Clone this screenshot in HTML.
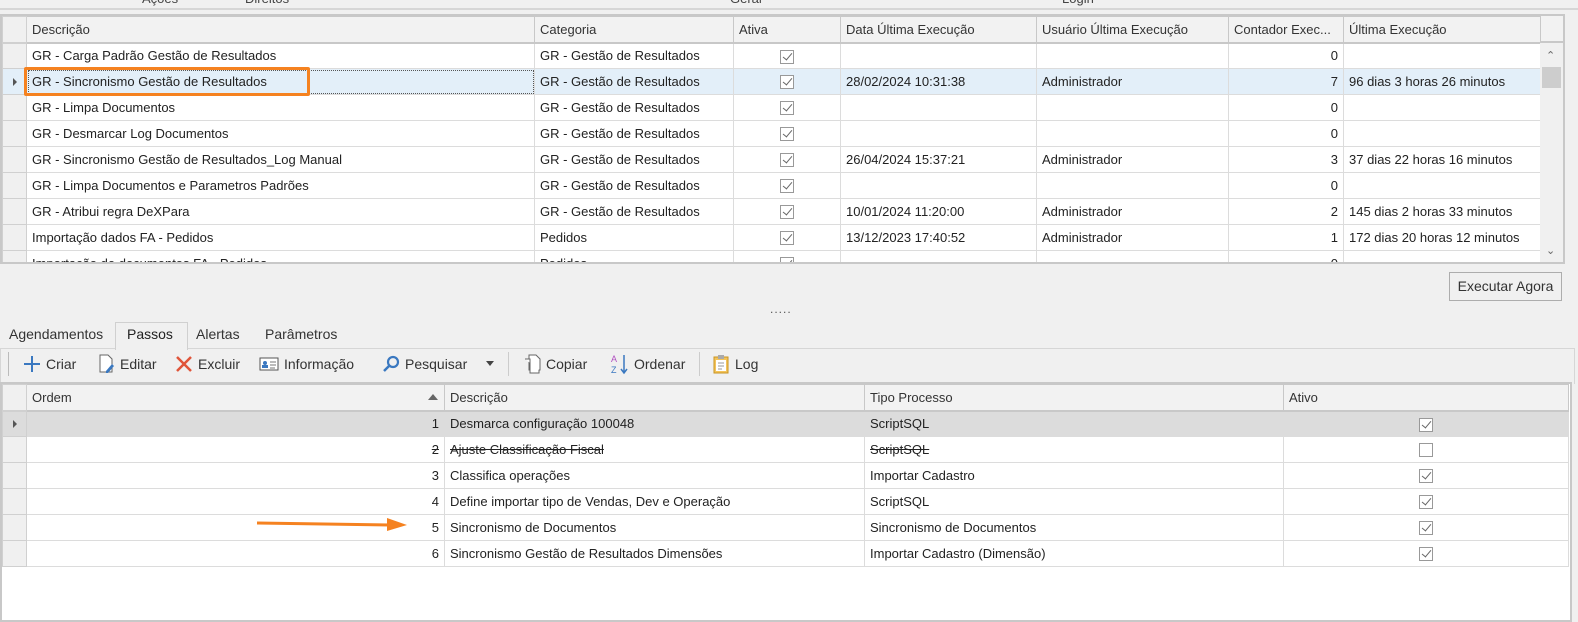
<!DOCTYPE html>
<html><head><meta charset="utf-8">
<style>
*{box-sizing:border-box;margin:0;padding:0}
body{width:1578px;height:618px;overflow:hidden;background:#f0f0f0;font-family:"Liberation Sans",sans-serif;font-size:13px;color:#222;position:relative}
.abs{position:absolute}
table{border-collapse:collapse;table-layout:fixed;background:#fff}
td,th{height:26px;border:1px solid #dcdcdc;padding:0 5px;white-space:nowrap;overflow:hidden;font-weight:normal;text-align:left}
th{background:#f2f2f2;border-color:#c8c8c8;border-bottom:2px solid #c8c8c8;color:#333}
td.ind,th.ind{background:#f0f0f0;border-color:#d0d0d0;padding:0}
.r{text-align:right}
.c{text-align:center;padding:0}
.cb{display:inline-block;width:14px;height:14px;border:1px solid #999;background:#fff;vertical-align:middle;position:relative}
.cb.k::after{content:"";position:absolute;left:4px;top:0px;width:4px;height:8px;border:solid #666;border-width:0 1.5px 1.5px 0;transform:rotate(40deg)}
tr.sel td{background:#e3eff9}
tr.g td{background:#dcdcdc}
.tri{display:inline-block;width:0;height:0;border-left:4px solid #555;border-top:4px solid transparent;border-bottom:4px solid transparent;margin-left:10px}
.tb{display:flex;align-items:center;gap:5px;position:absolute;top:352px;height:24px;font-size:14px;color:#333}
.sep{position:absolute;top:352px;width:1px;height:24px;background:#ccc}
</style></head><body>
<div class="abs" style="left:0;top:0;width:1578px;height:10px;background:#f0f0f0;border-bottom:2px solid #d6d6d6"></div>
<div class="abs" style="left:142px;top:-9px;color:#444">Ações</div>
<div class="abs" style="left:245px;top:-9px;color:#444">Direitos</div>
<div class="abs" style="left:730px;top:-9px;color:#444">Geral</div>
<div class="abs" style="left:1062px;top:-9px;color:#444">Login</div>

<div class="abs" style="left:0;top:14px;width:1565px;height:250px;border:2px solid #c8c8c8;overflow:hidden;background:#fff">
<table style="width:1540px">
<colgroup><col style="width:24px"><col style="width:508px"><col style="width:199px"><col style="width:107px"><col style="width:196px"><col style="width:192px"><col style="width:115px"><col style="width:199px"></colgroup>
<tr><th class="ind"></th><th>Descrição</th><th>Categoria</th><th>Ativa</th><th>Data Última Execução</th><th>Usuário Última Execução</th><th>Contador Exec...</th><th>Última Execução</th></tr>
<tr><td class="ind"></td><td>GR - Carga Padrão Gestão de Resultados</td><td>GR - Gestão de Resultados</td><td class="c"><span class="cb k"></span></td><td></td><td></td><td class="r">0</td><td></td></tr>
<tr class="sel"><td class="ind"><span class="tri"></span></td><td style="outline:1px dotted #555;outline-offset:-2px">GR - Sincronismo Gestão de Resultados</td><td>GR - Gestão de Resultados</td><td class="c"><span class="cb k"></span></td><td>28/02/2024 10:31:38</td><td>Administrador</td><td class="r">7</td><td>96 dias 3 horas 26 minutos</td></tr>
<tr><td class="ind"></td><td>GR - Limpa Documentos</td><td>GR - Gestão de Resultados</td><td class="c"><span class="cb k"></span></td><td></td><td></td><td class="r">0</td><td></td></tr>
<tr><td class="ind"></td><td>GR - Desmarcar Log Documentos</td><td>GR - Gestão de Resultados</td><td class="c"><span class="cb k"></span></td><td></td><td></td><td class="r">0</td><td></td></tr>
<tr><td class="ind"></td><td>GR - Sincronismo Gestão de Resultados_Log Manual</td><td>GR - Gestão de Resultados</td><td class="c"><span class="cb k"></span></td><td>26/04/2024 15:37:21</td><td>Administrador</td><td class="r">3</td><td>37 dias 22 horas 16 minutos</td></tr>
<tr><td class="ind"></td><td>GR - Limpa Documentos e Parametros Padrões</td><td>GR - Gestão de Resultados</td><td class="c"><span class="cb k"></span></td><td></td><td></td><td class="r">0</td><td></td></tr>
<tr><td class="ind"></td><td>GR - Atribui regra DeXPara</td><td>GR - Gestão de Resultados</td><td class="c"><span class="cb k"></span></td><td>10/01/2024 11:20:00</td><td>Administrador</td><td class="r">2</td><td>145 dias 2 horas 33 minutos</td></tr>
<tr><td class="ind"></td><td>Importação dados FA - Pedidos</td><td>Pedidos</td><td class="c"><span class="cb k"></span></td><td>13/12/2023 17:40:52</td><td>Administrador</td><td class="r">1</td><td>172 dias 20 horas 12 minutos</td></tr>
<tr><td class="ind"></td><td>Importação de documentos FA - Pedidos</td><td>Pedidos</td><td class="c"><span class="cb k"></span></td><td></td><td></td><td class="r">0</td><td></td></tr>
</table>
<div class="abs" style="left:1538px;top:0;width:23px;height:27px;background:#f2f2f2;border-bottom:2px solid #c8c8c8;border-left:1px solid #c8c8c8"></div>
<div class="abs" style="left:1538px;top:27px;width:23px;height:220px;background:#f0f0f0"></div>
<div class="abs" style="left:1544px;top:33px;color:#666;font-size:11px">&#8963;</div>
<div class="abs" style="left:1540px;top:51px;width:19px;height:21px;background:#cdcdcd"></div>
<div class="abs" style="left:1544px;top:228px;color:#666;font-size:11px">&#8964;</div>
</div>

<div class="abs" style="left:1449px;top:272px;width:113px;height:29px;border:1px solid #adadad;background:#f0f0f0;font-size:14px;color:#333;text-align:center;line-height:27px">Executar Agora</div>
<div class="abs" style="left:770px;top:302px;color:#555;font-size:12px;letter-spacing:1px">.....</div>

<div class="abs" style="left:0;top:348px;width:1575px;height:36px;border:1px solid #d6d6d6;border-bottom:none;background:#f0f0f0"></div>
<div class="abs" style="left:115px;top:322px;width:73px;height:28px;background:#f0f0f0;border:1px solid #d0d0d0;border-bottom:none"></div>
<div class="abs" style="left:9px;top:326px;font-size:14px;color:#333">Agendamentos</div>
<div class="abs" style="left:127px;top:326px;font-size:14px;color:#222">Passos</div>
<div class="abs" style="left:196px;top:326px;font-size:14px;color:#333">Alertas</div>
<div class="abs" style="left:265px;top:326px;font-size:14px;color:#333">Parâmetros</div>

<div class="sep" style="left:8px;background:#bbb"></div>
<div class="tb" style="left:23px"><svg width="18" height="18"><path d="M9 1v16M1 9h16" stroke="#3a78c0" stroke-width="2"/></svg>Criar</div>
<div class="tb" style="left:97px"><svg width="18" height="20"><path d="M3 1h8l4 4v13H3z" fill="#fff" stroke="#666"/><path d="M9 17l6-7 2 2-6 7h-2z" fill="#3a78c0"/></svg>Editar</div>
<div class="tb" style="left:175px"><svg width="18" height="18"><path d="M2 2l14 14M16 2L2 16" stroke="#e0553a" stroke-width="2.5"/></svg>Excluir</div>
<div class="tb" style="left:259px"><svg width="20" height="16"><rect x="1" y="2" width="18" height="12" fill="#fff" stroke="#555"/><circle cx="6" cy="7" r="2" fill="#3a78c0"/><rect x="3" y="9" width="6" height="3" fill="#3a78c0"/><path d="M11 6h6M11 9h6M11 12h5" stroke="#777"/></svg>Informação</div>
<div class="tb" style="left:382px"><svg width="18" height="18"><circle cx="11" cy="7" r="5" fill="none" stroke="#3a78c0" stroke-width="2.2"/><path d="M7 11l-5 5" stroke="#3a78c0" stroke-width="2.5"/></svg>Pesquisar</div>
<div class="abs" style="left:486px;top:361px;width:0;height:0;border-left:4px solid transparent;border-right:4px solid transparent;border-top:5px solid #444"></div>
<div class="sep" style="left:508px"></div>
<div class="tb" style="left:523px"><svg width="18" height="20"><path d="M6 1h7l4 4v11H6z" fill="#fff" stroke="#666"/><path d="M2 5h5v14h9v-3" fill="#fff" stroke="#666"/></svg>Copiar</div>
<div class="tb" style="left:611px"><svg width="18" height="22"><text x="0" y="9" font-size="9" fill="#b04fc0" font-family="Liberation Sans">A</text><text x="0" y="20" font-size="9" fill="#3a78c0" font-family="Liberation Sans">Z</text><path d="M13 2v17M10 16l3 4 3-4" stroke="#3a78c0" fill="none" stroke-width="1.5"/></svg>Ordenar</div>
<div class="sep" style="left:699px"></div>
<div class="tb" style="left:712px"><svg width="18" height="20"><rect x="2" y="3" width="14" height="16" fill="#f3c35a" stroke="#c99522"/><rect x="4" y="6" width="10" height="11" fill="#fff"/><rect x="6" y="1" width="6" height="4" fill="#aaa"/><path d="M6 9h6M6 12h6M6 15h4" stroke="#999"/></svg>Log</div>

<div class="abs" style="left:0;top:382px;width:1572px;height:240px;border:2px solid #c8c8c8;background:#fff;overflow:hidden">
<table style="width:1566px">
<colgroup><col style="width:24px"><col style="width:418px"><col style="width:420px"><col style="width:419px"><col style="width:285px"></colgroup>
<tr><th class="ind"></th><th style="position:relative">Ordem<span style="position:absolute;right:6px;top:9px;width:0;height:0;border-left:5px solid transparent;border-right:5px solid transparent;border-bottom:6px solid #666"></span></th><th>Descrição</th><th>Tipo Processo</th><th>Ativo</th></tr>
<tr class="g"><td class="ind"><span class="tri"></span></td><td class="r">1</td><td>Desmarca configuração 100048</td><td>ScriptSQL</td><td class="c"><span class="cb k"></span></td></tr>
<tr><td class="ind"></td><td class="r"><s>2</s></td><td><s>Ajuste Classificação Fiscal</s></td><td><s>ScriptSQL</s></td><td class="c"><span class="cb"></span></td></tr>
<tr><td class="ind"></td><td class="r">3</td><td>Classifica operações</td><td>Importar Cadastro</td><td class="c"><span class="cb k"></span></td></tr>
<tr><td class="ind"></td><td class="r">4</td><td>Define importar tipo de Vendas, Dev e Operação</td><td>ScriptSQL</td><td class="c"><span class="cb k"></span></td></tr>
<tr><td class="ind"></td><td class="r">5</td><td>Sincronismo de Documentos</td><td>Sincronismo de Documentos</td><td class="c"><span class="cb k"></span></td></tr>
<tr><td class="ind"></td><td class="r">6</td><td>Sincronismo Gestão de Resultados Dimensões</td><td>Importar Cadastro (Dimensão)</td><td class="c"><span class="cb k"></span></td></tr>
</table>
</div>

<div class="abs" style="left:24px;top:67px;width:286px;height:29px;border:3px solid #f58220;border-radius:2px"></div>
<svg class="abs" style="left:255px;top:516px" width="155" height="16"><path d="M2 7 L135 9" stroke="#f58220" stroke-width="3"/><path d="M132 2 L152 9 L132 15z" fill="#f58220"/></svg>
</body></html>
